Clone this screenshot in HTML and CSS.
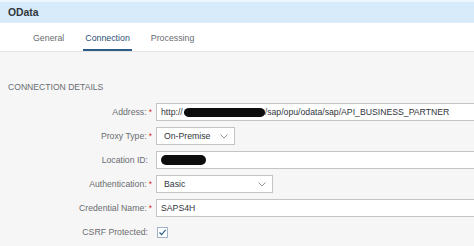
FILE: index.html
```html
<!DOCTYPE html>
<html>
<head>
<meta charset="utf-8">
<link rel="stylesheet" href="styles.css">
</head>
<body>
<header class="header"><span class="title">OData</span></header>
<nav class="tabs">
  <span class="tab">General</span>
  <span class="tab active">Connection</span>
  <span class="tab">Processing</span>
</nav>
<main class="content">
  <h2 class="section">CONNECTION DETAILS</h2>
  <div class="form">
    <label class="label">Address:<span class="req">*</span></label>
    <div class="input wide">http://<span class="redact r1"></span>/sap/opu/odata/sap/API_BUSINESS_PARTNER</div>

    <label class="label">Proxy Type:<span class="req">*</span></label>
    <div class="input select s1"><span>On-Premise</span><svg class="chev" width="8" height="5" viewBox="0 0 8 5"><path d="M0.5 0.5 L4 4 L7.5 0.5" fill="none" stroke="#8a8d90" stroke-width="0.9"/></svg></div>

    <label class="label plain">Location ID:</label>
    <div class="input wide"><span class="redact r2"></span></div>

    <label class="label">Authentication:<span class="req">*</span></label>
    <div class="input select s2"><span>Basic</span><svg class="chev" width="8" height="5" viewBox="0 0 8 5"><path d="M0.5 0.5 L4 4 L7.5 0.5" fill="none" stroke="#8a8d90" stroke-width="0.9"/></svg></div>

    <label class="label">Credential Name:<span class="req">*</span></label>
    <div class="input wide">SAPS4H</div>

    <label class="label plain">CSRF Protected:</label>
    <div class="checkcell"><span class="checkbox"><svg width="9" height="9" viewBox="0 0 9 9"><path d="M1.5 4.5 L3.6 6.6 L7.6 1.8" fill="none" stroke="#2a5d8c" stroke-width="1.2"/></svg></span></div>
  </div>
</main>
</body>
</html>
```
FILE: styles.css
```css
* { box-sizing: border-box; }
html, body { margin: 0; padding: 0; }
body {
  width: 474px;
  height: 246px;
  overflow: hidden;
  background: #f6f6f6;
  font-family: "Liberation Sans", Arial, sans-serif;
  color: #32363a;
}
.header {
  height: 23px;
  border-top: 2px solid #eef6fd;
  background: #d8ebfb;
  border-bottom: 1px solid #e2ecf4;
  display: flex;
  align-items: center;
  padding-left: 8px;
}
.title {
  font-weight: bold;
  font-size: 10.4px;
  color: #32363a;
}
.tabs {
  height: 29px;
  background: #ffffff;
  border-bottom: 1px solid #e4e4e4;
  display: flex;
  padding-left: 33px;
  gap: 21px;
}
.tab {
  font-size: 8.8px;
  color: #6a6d70;
  display: flex;
  align-items: center;
  position: relative;
  padding-top: 1px;
}
.tab.active {
  color: #2c4f74;
}
.tab.active::after {
  content: "";
  position: absolute;
  left: -2px;
  right: -2px;
  bottom: 0;
  height: 2px;
  background: #2f5b87;
}
.content {
  padding: 29px 0 0 0;
}
.section {
  margin: 0 0 10px 8px;
  font-size: 8.6px;
  font-weight: normal;
  color: #6a6d70;
  line-height: 12px;
}
.form {
  display: grid;
  grid-template-columns: 152px 340px;
  column-gap: 4px;
  row-gap: 6px;
  grid-auto-rows: 18px;
}
.label {
  font-size: 8.7px;
  color: #6a6d70;
  display: flex;
  align-items: center;
  justify-content: flex-end;
}
.label.plain { padding-right: 4px; }
.req {
  color: #d33;
  margin-left: 2px;
  font-size: 8.6px;
}
.input {
  background: #fff;
  border: 1px solid #c4c4c4;
  font-size: 8.7px;
  color: #32363a;
  display: flex;
  align-items: center;
  padding-left: 4px;
  white-space: nowrap;
}
.wide { width: 340px; }
.select {
  justify-content: space-between;
  padding-left: 7px;
  padding-right: 6px;
}
.s1 { width: 79px; }
.s2 { width: 117px; }
.redact {
  display: inline-block;
  background: #0d0d0d;
  border-radius: 5px / 4px;
}
.r1 { width: 81px; height: 9px; margin-left: 1px; }
.r2 { width: 45px; height: 10px; border-radius: 6px; }
.checkcell {
  display: flex;
  align-items: center;
}
.checkbox {
  margin-left: 1px;
  width: 11px;
  height: 11px;
  border: 1px solid #9fb3c8;
  background: #fff;
  display: flex;
  align-items: center;
  justify-content: center;
}
```
